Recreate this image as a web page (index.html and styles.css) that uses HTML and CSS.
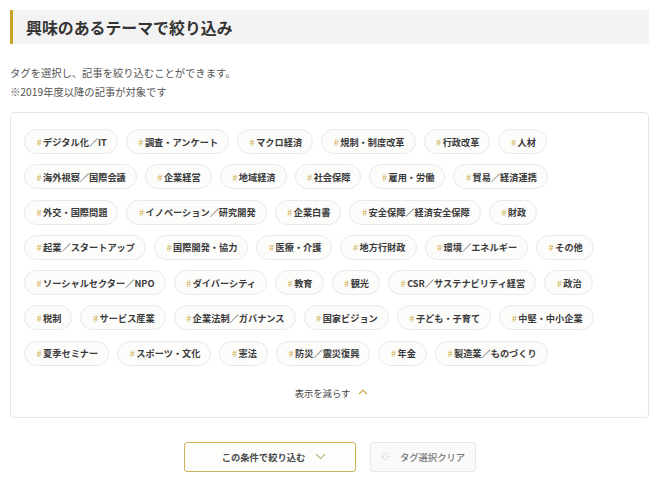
FILE: index.html
```html
<!DOCTYPE html>
<html lang="ja">
<head>
<meta charset="utf-8">
<title>興味のあるテーマで絞り込み</title>
<link rel="stylesheet" href="styles.css">
</head>
<body>
<div class="page">
  <h2 class="heading">興味のあるテーマで絞り込み</h2>
  <p class="lead">タグを選択し、記事を絞り込むことができます。<br>※2019年度以降の記事が対象です</p>
  <div class="tagbox">
    <ul class="tags">
      <li class="tag"><span class="hash">#</span>デジタル化／IT</li>
      <li class="tag"><span class="hash">#</span>調査・アンケート</li>
      <li class="tag"><span class="hash">#</span>マクロ経済</li>
      <li class="tag"><span class="hash">#</span>規制・制度改革</li>
      <li class="tag"><span class="hash">#</span>行政改革</li>
      <li class="tag"><span class="hash">#</span>人材</li>
      <li class="tag"><span class="hash">#</span>海外視察／国際会議</li>
      <li class="tag"><span class="hash">#</span>企業経営</li>
      <li class="tag"><span class="hash">#</span>地域経済</li>
      <li class="tag"><span class="hash">#</span>社会保障</li>
      <li class="tag"><span class="hash">#</span>雇用・労働</li>
      <li class="tag"><span class="hash">#</span>貿易／経済連携</li>
      <li class="tag"><span class="hash">#</span>外交・国際問題</li>
      <li class="tag"><span class="hash">#</span>イノベーション／研究開発</li>
      <li class="tag"><span class="hash">#</span>企業白書</li>
      <li class="tag"><span class="hash">#</span>安全保障／経済安全保障</li>
      <li class="tag"><span class="hash">#</span>財政</li>
      <li class="tag"><span class="hash">#</span>起業／スタートアップ</li>
      <li class="tag"><span class="hash">#</span>国際開発・協力</li>
      <li class="tag"><span class="hash">#</span>医療・介護</li>
      <li class="tag"><span class="hash">#</span>地方行財政</li>
      <li class="tag"><span class="hash">#</span>環境／エネルギー</li>
      <li class="tag"><span class="hash">#</span>その他</li>
      <li class="tag"><span class="hash">#</span>ソーシャルセクター／NPO</li>
      <li class="tag"><span class="hash">#</span>ダイバーシティ</li>
      <li class="tag"><span class="hash">#</span>教育</li>
      <li class="tag"><span class="hash">#</span>観光</li>
      <li class="tag"><span class="hash">#</span>CSR／サステナビリティ経営</li>
      <li class="tag"><span class="hash">#</span>政治</li>
      <li class="tag"><span class="hash">#</span>税制</li>
      <li class="tag"><span class="hash">#</span>サービス産業</li>
      <li class="tag"><span class="hash">#</span>企業法制／ガバナンス</li>
      <li class="tag"><span class="hash">#</span>国家ビジョン</li>
      <li class="tag"><span class="hash">#</span>子ども・子育て</li>
      <li class="tag"><span class="hash">#</span>中堅・中小企業</li>
      <li class="tag"><span class="hash">#</span>夏季セミナー</li>
      <li class="tag"><span class="hash">#</span>スポーツ・文化</li>
      <li class="tag"><span class="hash">#</span>憲法</li>
      <li class="tag"><span class="hash">#</span>防災／震災復興</li>
      <li class="tag"><span class="hash">#</span>年金</li>
      <li class="tag"><span class="hash">#</span>製造業／ものづくり</li>
    </ul>
    <div class="toggle">
      <span>表示を減らす</span>
      <svg class="chev-up" width="10" height="6" viewBox="0 0 10 6"><path d="M1 5.2 L5 1.2 L9 5.2" fill="none" stroke="#c9a53a" stroke-width="1.2"/></svg>
    </div>
  </div>
  <div class="actions">
    <button class="btn btn-submit">この条件で絞り込む
      <svg width="11" height="7" viewBox="0 0 11 7"><path d="M1 1.2 L5.5 5.6 L10 1.2" fill="none" stroke="#b9a46a" stroke-width="1.1"/></svg>
    </button>
    <button class="btn btn-clear">
      <svg width="9" height="9" viewBox="0 0 10 10">
        <g stroke="#d8d8d8" stroke-width="1.1" stroke-linecap="round">
          <line x1="5" y1="0.8" x2="5" y2="2.6"/>
          <line x1="5" y1="7.4" x2="5" y2="9.2"/>
          <line x1="0.8" y1="5" x2="2.6" y2="5"/>
          <line x1="7.4" y1="5" x2="9.2" y2="5"/>
          <line x1="2" y1="2" x2="3.2" y2="3.2"/>
          <line x1="6.8" y1="6.8" x2="8" y2="8"/>
          <line x1="8" y1="2" x2="6.8" y2="3.2"/>
          <line x1="2" y1="8" x2="3.2" y2="6.8"/>
        </g>
      </svg>
      タグ選択クリア
    </button>
  </div>
</div>
</body>
</html>
```
FILE: styles.css
```css
html, body {
  margin: 0;
  padding: 0;
  background: #ffffff;
}
body {
  font-family: "Noto Sans CJK JP", "Noto Sans", sans-serif;
  color: #333333;
}
.page {
  padding: 10px 11px 0 10px;
}
.heading {
  margin: 0;
  height: 34px;
  display: flex;
  align-items: center;
  padding-left: 13px;
  border-left: 3px solid #c9a22a;
  background: #f3f3f3;
  font-size: 15.9px;
  font-weight: 700;
  color: #333333;
  letter-spacing: 0;
}
.lead {
  margin: 19px 0 0 0;
  font-size: 10.3px;
  line-height: 19px;
  color: #555555;
}
.tagbox {
  margin-top: 11px;
  border: 1px solid #e6e6e6;
  border-radius: 4px;
  padding: 16px 13px 16px 13px;
}
.tags {
  list-style: none;
  margin: 0;
  padding: 0;
  display: flex;
  flex-wrap: wrap;
  column-gap: 8px;
  row-gap: 10.3px;
}
.tag {
  height: 23px;
  display: flex;
  align-items: center;
  padding: 0 10px 0 11.5px;
  border: 1px solid #e9e9e9;
  border-radius: 13px;
  background: #fcfcfb;
  font-size: 9.2px;
  font-weight: 700;
  color: #3a3a3a;
  white-space: nowrap;
}
.hash {
  color: #d0b04f;
  font-weight: 400;
  font-size: 9.2px;
  margin-right: 1.5px;
}
.toggle {
  margin-top: 19px;
  display: flex;
  justify-content: center;
  align-items: center;
  gap: 8px;
  font-size: 9.3px;
  color: #444444;
  height: 16px;
  padding-left: 4px;
}
.chev-up {
  margin-top: -1px;
}
.actions {
  margin-top: 24px;
  display: flex;
  justify-content: center;
  gap: 14px;
  padding-left: 1px;
}
.btn {
  height: 30px;
  display: flex;
  align-items: center;
  justify-content: center;
  font-family: "Noto Sans CJK JP", "Noto Sans", sans-serif;
  font-size: 9.3px;
  border-radius: 3px;
  padding: 0;
  cursor: pointer;
}
.btn-submit {
  width: 172px;
  gap: 10px;
  border: 1px solid #ccb15a;
  background: #fdfdfb;
  font-weight: 700;
  color: #4a4a4a;
  padding-left: 8px;
}
.btn-clear {
  width: 106px;
  gap: 10px;
  border: 1px solid #e8e8e8;
  background: #fafafa;
  color: #777777;
  font-weight: 500;
}
```
